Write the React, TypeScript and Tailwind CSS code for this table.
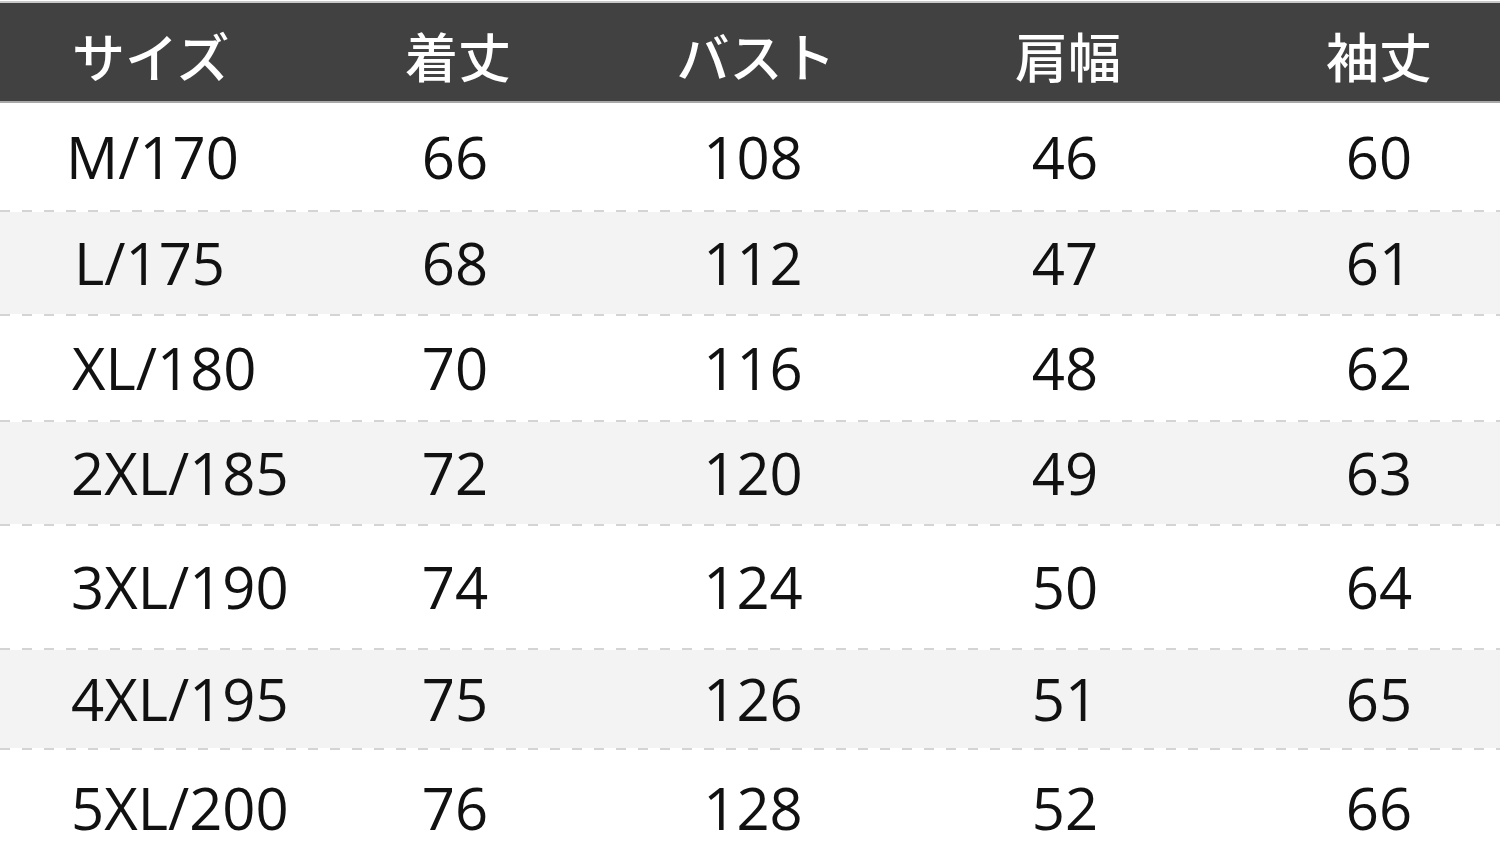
import React from "react";

const rows: { size: string; vals: string[]; h: string; gray: boolean; pad: string }[] = [
  { size: "M/170", vals: ["66", "108", "46", "60"], h: "h-[107px]", gray: false, pad: "pl-[66px]" },
  { size: "L/175", vals: ["68", "112", "47", "61"], h: "h-[102px]", gray: true, pad: "pl-[74px]" },
  { size: "XL/180", vals: ["70", "116", "48", "62"], h: "h-[104px]", gray: false, pad: "pl-[72px]" },
  { size: "2XL/185", vals: ["72", "120", "49", "63"], h: "h-[102px]", gray: true, pad: "pl-[71px]" },
  { size: "3XL/190", vals: ["74", "124", "50", "64"], h: "h-[122px]", gray: false, pad: "pl-[71px]" },
  { size: "4XL/195", vals: ["75", "126", "51", "65"], h: "h-[98px]", gray: true, pad: "pl-[71px]" },
  { size: "5XL/200", vals: ["76", "128", "52", "66"], h: "h-[91px] pt-[25px]", gray: false, pad: "pl-[71px]" },
];

const grid = "grid grid-cols-[300px_310px_286px_338px_1fr] items-center";

function Dash() {
  return (
    <div className="h-[2px] w-full shrink-0 bg-white bg-[image:repeating-linear-gradient(90deg,#d4d4d4_0px,#d4d4d4_10px,transparent_10px,transparent_22px)]" />
  );
}

export default function App() {
  return (
    <div className="w-[1500px] h-[841px] overflow-hidden bg-white flex flex-col">
      <div className="h-[1px] bg-white shrink-0" />
      <div className="h-[2px] bg-[#c9c9c9] shrink-0" />
      <div
        className={`${grid} h-[98px] shrink-0 bg-[#414141] text-white text-[53px] font-medium leading-none pt-[6px]`}
        style={{ fontFamily: '"Noto Sans CJK JP", "Noto Sans", sans-serif' }}
      >
        <div className="pl-[72px]">サイズ</div>
        <div className="text-center pl-[6px]">着丈</div>
        <div className="text-center pl-[6px]">バスト</div>
        <div className="text-center pl-[6px]">肩幅</div>
        <div className="text-center pl-[24px]">袖丈</div>
      </div>
      <div className="h-[2px] bg-[#a8a8a8] shrink-0" />
      {rows.map((r, i) => (
        <React.Fragment key={r.size}>
          {i > 0 && <Dash />}
          <div
            className={`${grid} ${r.h} shrink-0 ${r.gray ? "bg-[#f3f3f3]" : "bg-white"} text-[#111] text-[58px] leading-none`}
            style={{ fontFamily: '"Open Sans", "Noto Sans", sans-serif' }}
          >
            <div className={r.pad}>{r.size}</div>
            {r.vals.map((v, j) => (
              <div key={j} className={`text-center ${j === 3 ? "pl-[24px]" : ""}`}>
                {v}
              </div>
            ))}
          </div>
        </React.Fragment>
      ))}
    </div>
  );
}
